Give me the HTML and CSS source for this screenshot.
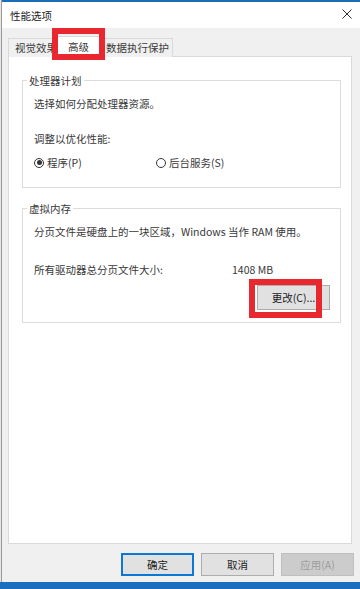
FILE: index.html
```html
<!DOCTYPE html>
<html lang="zh-CN">
<head>
<meta charset="utf-8">
<title>性能选项</title>
<link rel="stylesheet" href="styles.css">
</head>
<body>
<div class="window">
  <div class="titlebar">
    <span class="title">性能选项</span>
    <svg class="close" width="10" height="10" viewBox="0 0 10 10"><path d="M0.5 0.5 L9.5 9.5 M9.5 0.5 L0.5 9.5" stroke="#2b2b2b" stroke-width="1" fill="none"/></svg>
  </div>
  <div class="client">
    <div class="tabs">
      <div class="tab tab-visual">视觉效果</div>
      <div class="tab tab-adv active">高级<span class="mark mark-tab"></span></div>
      <div class="tab tab-dep">数据执行保护</div>
    </div>
    <div class="panel">
      <fieldset class="group group-cpu">
        <legend>处理器计划</legend>
        <p class="line first">选择如何分配处理器资源。</p>
        <p class="line adjust">调整以优化性能:</p>
        <div class="radios">
          <label class="radio-item item-prog"><span class="radio checked"><span class="dot"></span></span>程序(P)</label>
          <label class="radio-item"><span class="radio"></span>后台服务(S)</label>
        </div>
      </fieldset>
      <fieldset class="group group-vm">
        <legend>虚拟内存</legend>
        <p class="line first">分页文件是硬盘上的一块区域，Windows 当作 RAM 使用。</p>
        <div class="size-row">
          <span>所有驱动器总分页文件大小:</span>
          <span>1408 MB</span>
        </div>
        <div class="change-row">
          <button class="btn btn-change">更改(C)...<span class="mark mark-btn"></span></button>
        </div>
      </fieldset>
    </div>
    <div class="actions">
      <button class="btn btn-default">确定</button>
      <button class="btn">取消</button>
      <button class="btn btn-disabled">应用(A)</button>
    </div>
  </div>
  <div class="taskbar"></div>
</div>
</body>
</html>
```

FILE: styles.css
```css
* { box-sizing: border-box; }
html, body { margin: 0; padding: 0; }
body {
  width: 360px;
  height: 589px;
  overflow: hidden;
  background: #e6e6e6;
  font-family: "Noto Sans CJK SC", "Noto Sans", sans-serif;
  font-size: 10.5px;
  line-height: 15px;
  color: #383838;
}
.window {
  margin-left: 1px;
  border-left: 1px solid #9a9a9a;
  height: 589px;
  display: flex;
  flex-direction: column;
  background: #f0f0f0;
}
.titlebar {
  height: 28px;
  border-top: 2px solid #1c6db5;
  background: #fff;
  display: flex;
  align-items: center;
  justify-content: space-between;
  padding: 0 8px 0 8px;
}
.title { color: #222; }
.close { display: block; margin-top: -2px; }
.client {
  flex: 1;
  padding: 8px 6px 0 6px;
  display: flex;
  flex-direction: column;
}
.tabs {
  display: flex;
  align-items: flex-end;
  height: 21px;
  margin-bottom: -1px;
  position: relative;
  z-index: 1;
}
.tab {
  height: 19px;
  border: 1px solid #d9d9d9;
  border-bottom: none;
  background: #f0f0f0;
  line-height: 17px;
  text-align: center;
  position: relative;
  white-space: nowrap;
  overflow: visible;
}
.tab-visual { width: 47px; text-align: left; padding-left: 6px; }
.tab-adv { width: 47px; }
.tab-dep { width: 71px; }
.tab.active {
  height: 21px;
  background: #fff;
  line-height: 19px;
  z-index: 1;
}
.mark {
  position: absolute;
  border: 6px solid #e8272e;
  pointer-events: none;
}
.mark-tab { left: -4px; top: -9px; right: -4px; bottom: -3px; }
.panel {
  width: 344px;
  height: 488px;
  background: #fff;
  border: 1px solid #d9d9d9;
  padding: 16px 10px 0 13px;
}
.group {
  margin: 0;
  border: 1px solid #dcdcdc;
  padding: 0 10px 0 11px;
  min-width: 0;
}
.group legend {
  padding: 0 2px;
  margin-left: -7px;
  line-height: 15px;
}
.line { margin: 0; }
.line.first { margin-top: 8px; }
.line.adjust { margin-top: 20px; }
.group-cpu { padding-bottom: 17px; }
.radios {
  display: flex;
  margin-top: 9px;
}
.radio-item {
  display: flex;
  align-items: center;
  gap: 3px;
}
.item-prog { width: 122px; }
.radio {
  width: 10px;
  height: 10px;
  border: 1px solid #333;
  border-radius: 50%;
  display: flex;
  align-items: center;
  justify-content: center;
}
.dot {
  width: 5px;
  height: 5px;
  border-radius: 50%;
  background: #333;
}
.group-vm { margin-top: 13px; padding-bottom: 12px; }
.size-row {
  display: grid;
  grid-template-columns: 198px auto;
  margin-top: 23px;
}
.change-row {
  display: flex;
  justify-content: flex-end;
  margin-top: 8px;
}
.btn {
  font-family: inherit;
  font-size: 10.5px;
  color: #222;
  width: 73px;
  height: 23px;
  background: #e1e1e1;
  border: 1px solid #adadad;
  padding: 0;
  position: relative;
}
.btn-change { height: 25px; }
.mark-btn { left: -9px; top: -7px; right: 7px; bottom: -9px; }
.actions {
  display: flex;
  justify-content: flex-end;
  gap: 7px;
  margin-top: 9px;
}
.btn-default { border: 2px solid #0a78d4; }
.btn-disabled {
  background: #cccccc;
  border-color: #bfbfbf;
  color: #9c9c9c;
}
.taskbar {
  height: 7px;
  background: #1c6fbf;
  margin-left: -2px;
}
```
